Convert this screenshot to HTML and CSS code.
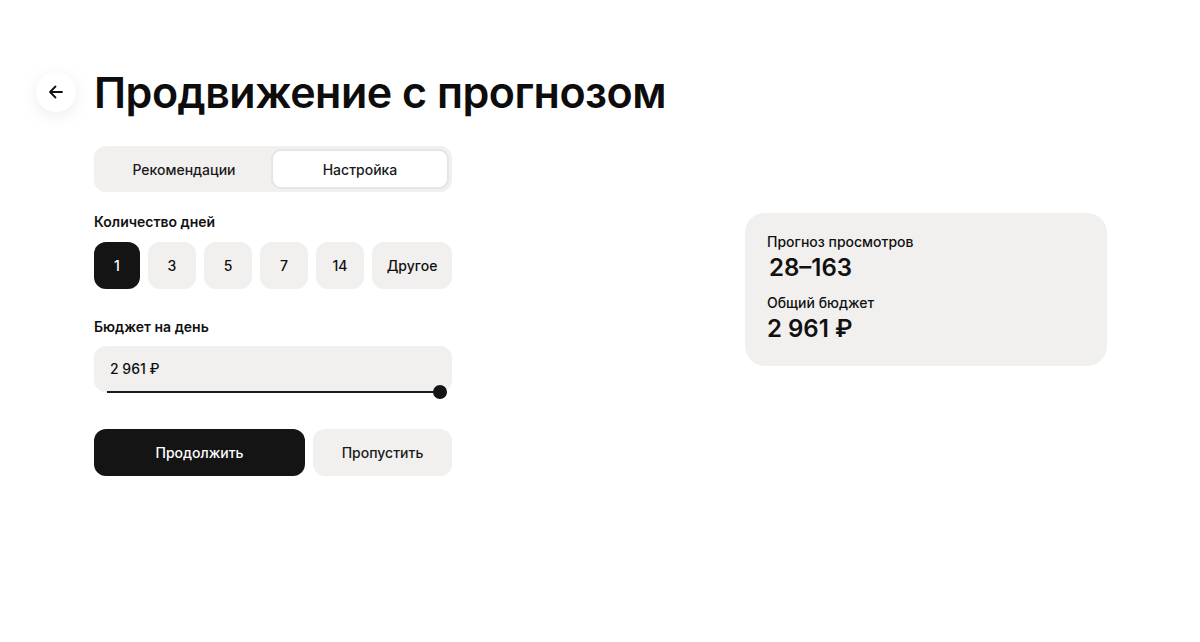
FILE: index.html
```html
<!DOCTYPE html>
<html lang="ru">
<head>
<meta charset="utf-8">
<link rel="stylesheet" href="styles.css">
</head>
<body>
<div class="page">
  <header class="header">
    <button class="back" aria-label="Назад">
      <svg width="18" height="18" viewBox="0 0 18 18" fill="none" stroke="#111" stroke-width="1.8" stroke-linecap="round" stroke-linejoin="round"><path d="M15 9H3.5M8.5 3.5 3 9l5.5 5.5"/></svg>
    </button>
    <h1 class="title">Продвижение с прогнозом</h1>
  </header>
  <main class="main">
    <section class="form">
      <div class="tabs">
        <div class="tab">Рекомендации</div>
        <div class="tab tab-active">Настройка</div>
      </div>
      <h2 class="label label-days">Количество дней</h2>
      <div class="days">
        <div class="day day-active">1</div>
        <div class="day">3</div>
        <div class="day">5</div>
        <div class="day">7</div>
        <div class="day">14</div>
        <div class="day day-other">Другое</div>
      </div>
      <h2 class="label label-budget">Бюджет на день</h2>
      <div class="budget">
        <div class="budget-value">2 961 ₽</div>
        <div class="slider"><div class="thumb"></div></div>
      </div>
      <div class="actions">
        <button class="btn btn-primary">Продолжить</button>
        <button class="btn btn-secondary">Пропустить</button>
      </div>
    </section>
    <aside class="card">
      <div class="card-label">Прогноз просмотров</div>
      <div class="card-value card-views">28–163</div>
      <div class="card-label card-label2">Общий бюджет</div>
      <div class="card-value">2 961 ₽</div>
    </aside>
  </main>
</div>
</body>
</html>
```
FILE: styles.css
```css
* { box-sizing: border-box; }
html, body { margin: 0; background: #fff; }
body {
  font-family: Inter, "Noto Sans", "Liberation Sans", sans-serif;
  color: #111;
}
.page {
  padding: 72px 0 0 36px;
}
.header {
  display: flex;
  align-items: center;
  gap: 18px;
}
.back {
  width: 40px;
  height: 40px;
  border-radius: 50%;
  border: none;
  background: #fff;
  box-shadow: 0 4px 18px rgba(0,0,0,0.08);
  display: flex;
  align-items: center;
  justify-content: center;
  padding: 0;
}
.title {
  margin: 0;
  font-size: 43px;
  font-weight: 600;
  letter-spacing: -0.5px;
  line-height: 40px;
  color: #0d0d0d;
}
.main {
  display: flex;
  align-items: flex-start;
  padding-left: 58px;
  margin-top: 34px;
  gap: 293px;
}
.form {
  width: 358px;
  display: flex;
  flex-direction: column;
}
.tabs {
  display: flex;
  height: 46px;
  background: #f1f0ee;
  border-radius: 12px;
  padding: 3px;
}
.tab {
  flex: 1;
  display: flex;
  align-items: center;
  justify-content: center;
  font-size: 14px;
  font-weight: 500;
  color: #1a1a1a;
  border-radius: 10px;
}
.tab-active {
  background: #fff;
  border: 2px solid #e6e5e3;
}
.label {
  margin: 0;
  font-size: 14px;
  font-weight: 600;
  line-height: 18px;
}
.label-days { margin-top: 21px; }
.days {
  display: flex;
  justify-content: space-between;
  margin-top: 11px;
}
.day {
  height: 47px;
  min-width: 48px;
  padding: 0 16px;
  display: flex;
  align-items: center;
  justify-content: center;
  background: #f1f0ee;
  border-radius: 12px;
  font-size: 14px;
  font-weight: 500;
}
.day-active {
  background: #141414;
  color: #fff;
  min-width: 46px;
}
.day-other { width: 80px; }
.label-budget { margin-top: 29px; }
.budget {
  margin-top: 10px;
  height: 46px;
  background: #f1f0ee;
  border-radius: 12px;
  position: relative;
  padding: 14px 16px;
  font-size: 14px;
  font-weight: 500;
}
.slider {
  position: absolute;
  left: 13px;
  right: 12px;
  bottom: -1px;
  height: 2px;
  background: #1a1a1a;
}
.thumb {
  position: absolute;
  right: -7px;
  top: -6px;
  width: 14px;
  height: 14px;
  border-radius: 50%;
  background: #141414;
}
.actions {
  display: flex;
  gap: 8px;
  margin-top: 37px;
}
.btn {
  height: 47px;
  border: none;
  border-radius: 12px;
  font-family: inherit;
  font-size: 14px;
  font-weight: 500;
}
.btn-primary {
  width: 211px;
  background: #141414;
  color: #fff;
}
.btn-secondary {
  flex: 1;
  background: #f1f0ee;
  color: #1a1a1a;
}
.card {
  margin-top: 67px;
  width: 362px;
  height: 153px;
  background: #f1f0ee;
  border-radius: 20px;
  padding: 20px 22px;
}
.card-label {
  font-size: 14px;
  line-height: 18px;
  font-weight: 500;
}
.card-value {
  font-size: 24px;
  font-weight: 600;
  line-height: 30px;
  margin-top: 2px;
}
.card-views { padding-left: 2px; }
.card-label2 { margin-top: 11px; }
```
